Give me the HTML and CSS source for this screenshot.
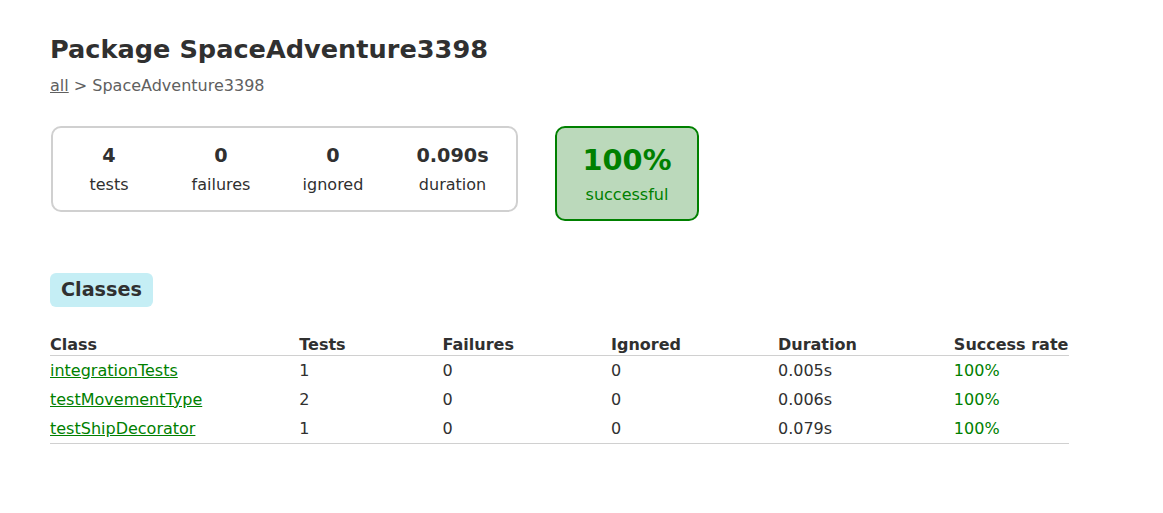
FILE: index.html
```html
<!DOCTYPE html>
<html>
<head>
<meta charset="utf-8">
<title>Test results - Package SpaceAdventure3398</title>
<link rel="stylesheet" href="styles.css">
</head>
<body>
<div class="content">
  <h1 class="title">Package SpaceAdventure3398</h1>
  <div class="breadcrumbs"><a href="#">all</a> &gt; SpaceAdventure3398</div>

  <div class="summary">
    <div class="summary-group">
      <div class="info-box"><div class="counter">4</div><p>tests</p></div>
      <div class="info-box"><div class="counter">0</div><p>failures</p></div>
      <div class="info-box"><div class="counter">0</div><p>ignored</p></div>
      <div class="info-box info-box-wide"><div class="counter">0.090s</div><p>duration</p></div>
    </div>
    <div class="info-box success-rate">
      <div class="percent">100%</div>
      <p>successful</p>
    </div>
  </div>

  <div class="section">
    <h2 class="pill">Classes</h2>
    <table class="classes">
      <thead>
        <tr>
          <th>Class</th><th>Tests</th><th>Failures</th><th>Ignored</th><th>Duration</th><th>Success rate</th>
        </tr>
      </thead>
      <tbody>
        <tr>
          <td class="success"><a href="#">integrationTests</a></td><td>1</td><td>0</td><td>0</td><td>0.005s</td><td class="success">100%</td>
        </tr>
        <tr>
          <td class="success"><a href="#">testMovementType</a></td><td>2</td><td>0</td><td>0</td><td>0.006s</td><td class="success">100%</td>
        </tr>
        <tr>
          <td class="success"><a href="#">testShipDecorator</a></td><td>1</td><td>0</td><td>0</td><td>0.079s</td><td class="success">100%</td>
        </tr>
      </tbody>
    </table>
  </div>
</div>
</body>
</html>
```

FILE: styles.css
```css
html, body {
  margin: 0;
  padding: 0;
  background: #ffffff;
}

body {
  font-family: "DejaVu Sans", sans-serif;
  font-size: 16px;
  color: #303030;
}

a, a:visited {
  color: #303030;
}

.content {
  padding: 30px 50px;
}

.title {
  font-size: 25.6px;
  font-weight: bold;
  margin: 4px 0 12px 0;
  white-space: nowrap;
}

.breadcrumbs, .breadcrumbs a {
  color: #606060;
}

.summary {
  display: flex;
  align-items: flex-start;
  margin-top: 31px;
  margin-bottom: 40px;
  padding-left: 1px;
}

.summary-group {
  display: flex;
  border: 2px solid #d0d0d0;
  border-radius: 10px;
  padding: 1px;
  gap: 2px;
}

.info-box {
  width: 110px;
  padding: 15px 0;
  text-align: center;
}

.info-box-wide {
  width: 125px;
}

.info-box p {
  margin: 0;
}

.counter, .percent {
  font-size: 19.2px;
  font-weight: bold;
  margin-bottom: 8px;
}

.success-rate {
  width: 140px;
  margin-left: 37px;
  border: 2px solid #008000;
  border-radius: 10px;
  background-color: #bbd9bb;
  color: #008000;
}

.success-rate .percent {
  font-size: 28.8px;
}

.section {
  margin-top: 52px;
}

.pill {
  display: inline-block;
  margin: 0 0 27px 0;
  padding: 6px 11px;
  font-size: 19.2px;
  font-weight: bold;
  line-height: 22px;
  background: #c5eef5;
  border-radius: 6px;
  white-space: nowrap;
}

.classes {
  display: table;
  border-collapse: collapse;
  border-bottom: 1px solid #d0d0d0;
}

.classes th {
  text-align: left;
  white-space: nowrap;
  padding: 1px 1px 1px 6em;
  border-bottom: 1px solid #d0d0d0;
}

.classes td {
  white-space: nowrap;
  padding: 5px 1px 5px 6em;
}

.classes th:first-child,
.classes td:first-child {
  padding-left: 0;
}

.success, .success a, .success a:visited {
  color: #008000;
}
```
